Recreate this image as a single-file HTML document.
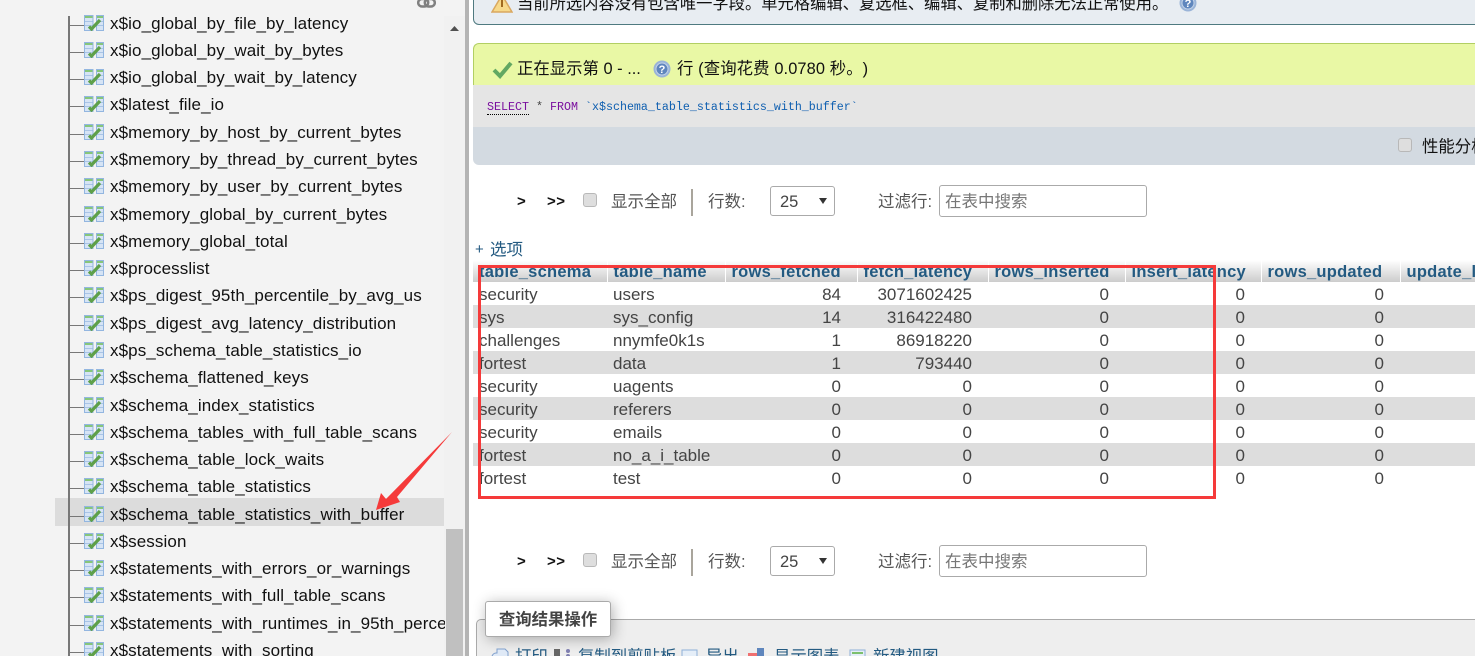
<!DOCTYPE html>
<html lang="zh">
<head>
<meta charset="utf-8">
<title>phpMyAdmin</title>
<style>
html,body{margin:0;padding:0;width:1475px;height:656px;overflow:hidden;background:#fff}
body{position:relative;font-family:"Liberation Sans","Noto Sans CJK SC",sans-serif;color:#444;text-spacing-trim:space-all}
.a{position:absolute;white-space:nowrap}
#side{left:0;top:0;width:465px;height:656px;background:#f3f3f3;overflow:hidden}
#strip{left:465px;top:0;width:4px;height:656px;background:#b4b4b4}
#track{left:444px;top:16px;width:21px;height:640px;background:#f1f1f1}
#thumb{left:446px;top:529px;width:17px;height:127px;background:#c0c0c0}
#sel{left:55px;top:498px;width:389px;height:28px;background:#dcdcdc}
#vline{left:68px;top:16px;width:1.5px;height:640px;background:#777}
.t{position:absolute;left:110px;width:335px;overflow:hidden;font-size:17px;line-height:22px;height:24px;margin-top:1px;color:#111;white-space:nowrap;letter-spacing:.1px}
.h{position:absolute;left:69px;width:15px;height:1px;margin-top:1.5px;background:#777}
.i{position:absolute;left:84px;width:20px;height:16px}
.msg{font-size:16.4px;color:#111;margin-top:1px}
table{position:absolute;left:473px;top:260px;border-collapse:collapse;table-layout:fixed;width:1002px;font-size:17px}
th,td{padding:2px 16px 0 6px;overflow:hidden;white-space:nowrap;box-sizing:border-box}
th{height:22px;line-height:20px;font-weight:bold;color:#235a81;text-align:left;background:linear-gradient(#fff,#ccc);border-right:1px solid #fff;font-size:16.5px;letter-spacing:.25px}
td{height:23px;line-height:21px;color:#444}
td.r{text-align:right}
tr.e td{background:#ddd}
.nav{font-size:16.5px;color:#555;margin-top:1px}
.box{position:absolute;background:#dedede;border:1px solid #b8b8b8;border-radius:3px;box-sizing:border-box;width:14px;height:14px}
.sel{border:1px solid #aaa;border-radius:3px;background:#fff;box-sizing:border-box}
.lnk{font-size:16.4px;line-height:20px;color:#235a81;top:647px}
</style>
</head>
<body>
<svg width="0" height="0" style="position:absolute">
<symbol id="v" viewBox="0 0 20 16">
<rect x="0.5" y="0.5" width="8.5" height="15" fill="#d6e4f5" stroke="#93b6e0"/>
<rect x="12.5" y="0.5" width="7" height="15" fill="#d6e4f5" stroke="#93b6e0"/>
<rect x="1" y="1" width="7.5" height="2" fill="#86c67a"/>
<rect x="13" y="1" width="6" height="2" fill="#86c67a"/>
<path d="M1 6.5h7.5M1 10.5h7.5M13 6.5h6M13 10.5h6" stroke="#a9c4e6"/>
<path d="M5 11.5l2.5 2.5L16 5" fill="none" stroke="#5ea04a" stroke-width="3.2"/>
</symbol>
<symbol id="q" viewBox="0 0 18 18">
<circle cx="9" cy="9" r="8.5" fill="#9ab4d8"/>
<circle cx="9" cy="9" r="6" fill="#5f86bd" stroke="#c3d3e8"/>
<text x="9" y="13" font-size="11" font-weight="bold" text-anchor="middle" fill="#fff" font-family="Liberation Sans">?</text>
</symbol>
</svg>

<div class="a" id="side">
<div class="a" id="track"></div>
<div class="a" id="thumb"></div>
<div class="a" id="sel"></div>
<div class="a" id="vline"></div>
<svg class="a" style="left:417px;top:-3px" width="19" height="11"><rect x="1.2" y="2" width="10" height="7.5" rx="3.7" fill="none" stroke="#808080" stroke-width="2.5"/><rect x="7.8" y="2" width="10" height="7.5" rx="3.7" fill="none" stroke="#808080" stroke-width="2.5"/></svg>
<svg class="a" style="left:449px;top:25px" width="11" height="7"><path d="M5.5 1L10 6H1z" fill="#505050"/></svg>

<div class="h" style="top:23px"></div><svg class="i" style="top:15px"><use href="#v"/></svg><div class="t" style="top:12px">x$io_global_by_file_by_latency</div>
<div class="h" style="top:50px"></div><svg class="i" style="top:42px"><use href="#v"/></svg><div class="t" style="top:39px">x$io_global_by_wait_by_bytes</div>
<div class="h" style="top:77px"></div><svg class="i" style="top:69px"><use href="#v"/></svg><div class="t" style="top:66px">x$io_global_by_wait_by_latency</div>
<div class="h" style="top:104px"></div><svg class="i" style="top:96px"><use href="#v"/></svg><div class="t" style="top:93px">x$latest_file_io</div>
<div class="h" style="top:132px"></div><svg class="i" style="top:124px"><use href="#v"/></svg><div class="t" style="top:121px">x$memory_by_host_by_current_bytes</div>
<div class="h" style="top:159px"></div><svg class="i" style="top:151px"><use href="#v"/></svg><div class="t" style="top:148px">x$memory_by_thread_by_current_bytes</div>
<div class="h" style="top:186px"></div><svg class="i" style="top:178px"><use href="#v"/></svg><div class="t" style="top:175px">x$memory_by_user_by_current_bytes</div>
<div class="h" style="top:214px"></div><svg class="i" style="top:206px"><use href="#v"/></svg><div class="t" style="top:203px">x$memory_global_by_current_bytes</div>
<div class="h" style="top:241px"></div><svg class="i" style="top:233px"><use href="#v"/></svg><div class="t" style="top:230px">x$memory_global_total</div>
<div class="h" style="top:268px"></div><svg class="i" style="top:260px"><use href="#v"/></svg><div class="t" style="top:257px">x$processlist</div>
<div class="h" style="top:295px"></div><svg class="i" style="top:287px"><use href="#v"/></svg><div class="t" style="top:284px">x$ps_digest_95th_percentile_by_avg_us</div>
<div class="h" style="top:323px"></div><svg class="i" style="top:315px"><use href="#v"/></svg><div class="t" style="top:312px">x$ps_digest_avg_latency_distribution</div>
<div class="h" style="top:350px"></div><svg class="i" style="top:342px"><use href="#v"/></svg><div class="t" style="top:339px">x$ps_schema_table_statistics_io</div>
<div class="h" style="top:377px"></div><svg class="i" style="top:369px"><use href="#v"/></svg><div class="t" style="top:366px">x$schema_flattened_keys</div>
<div class="h" style="top:405px"></div><svg class="i" style="top:397px"><use href="#v"/></svg><div class="t" style="top:394px">x$schema_index_statistics</div>
<div class="h" style="top:432px"></div><svg class="i" style="top:424px"><use href="#v"/></svg><div class="t" style="top:421px">x$schema_tables_with_full_table_scans</div>
<div class="h" style="top:459px"></div><svg class="i" style="top:451px"><use href="#v"/></svg><div class="t" style="top:448px">x$schema_table_lock_waits</div>
<div class="h" style="top:486px"></div><svg class="i" style="top:478px"><use href="#v"/></svg><div class="t" style="top:475px">x$schema_table_statistics</div>
<div class="h" style="top:514px"></div><svg class="i" style="top:506px"><use href="#v"/></svg><div class="t" style="top:503px">x$schema_table_statistics_with_buffer</div>
<div class="h" style="top:541px"></div><svg class="i" style="top:533px"><use href="#v"/></svg><div class="t" style="top:530px">x$session</div>
<div class="h" style="top:568px"></div><svg class="i" style="top:560px"><use href="#v"/></svg><div class="t" style="top:557px">x$statements_with_errors_or_warnings</div>
<div class="h" style="top:595px"></div><svg class="i" style="top:587px"><use href="#v"/></svg><div class="t" style="top:584px">x$statements_with_full_table_scans</div>
<div class="h" style="top:623px"></div><svg class="i" style="top:615px"><use href="#v"/></svg><div class="t" style="top:612px">x$statements_with_runtimes_in_95th_percentile</div>
<div class="h" style="top:650px"></div><svg class="i" style="top:642px"><use href="#v"/></svg><div class="t" style="top:639px">x$statements_with_sorting</div>
</div>
<div class="a" id="strip"></div>

<!-- top notice -->
<div class="a" style="left:473px;top:-10px;width:1010px;height:35px;background:#e8edf2;border:1px solid #4f7a80;border-top:0;border-radius:0 0 0 6px;box-sizing:border-box"></div>
<svg class="a" style="left:491px;top:-6px" width="22" height="20"><path d="M11 1L21 18H1z" fill="#f7d98a" stroke="#d9a860" stroke-width="1.5"/><rect x="10" y="6" width="2" height="7" fill="#a06a20"/></svg>
<div class="a msg" style="left:517px;top:-7px;line-height:20px;font-size:16.3px">当前所选内容没有包含唯一字段。单元格编辑、复选框、编辑、复制和删除无法正常使用。</div>
<svg class="a" style="left:1179px;top:-6px" width="18" height="18"><use href="#q"/></svg>

<!-- success -->
<div class="a" style="left:473px;top:43px;width:1010px;height:42px;background:#e9f8a5;border-top:1px solid #b2cf63;border-left:1px solid #b2cf63;border-radius:6px 0 0 0;box-sizing:border-box"></div>
<svg class="a" style="left:492px;top:60px" width="21" height="19"><path d="M2 10l6 6L19 3" fill="none" stroke="#62a862" stroke-width="4"/></svg>
<div class="a msg" style="left:517px;top:57px;line-height:22px">正在显示第 0 - ...</div>
<svg class="a" style="left:653px;top:60px" width="18" height="18"><use href="#q"/></svg>
<div class="a msg" style="left:677px;top:57px;line-height:22px;letter-spacing:.1px">行 (查询花费 0.0780 秒。)</div>

<div class="a" style="left:473px;top:85px;width:1002px;height:42px;background:#e5e5e5"></div>
<div class="a" style="left:487px;top:99px;font:11.67px/16px 'Liberation Mono',monospace;color:#444"><span style="color:#7a0f9e;border-bottom:1px dotted #000">SELECT</span> * <span style="color:#7a0f9e">FROM</span> <span style="color:#0f5fb0">`x$schema_table_statistics_with_buffer`</span></div>
<div class="a" style="left:473px;top:127px;width:1002px;height:38px;background:#d3dae1;border-radius:0 0 0 6px"></div>
<div class="box" style="left:1398px;top:138px"></div>
<div class="a msg" style="left:1422px;top:135px;line-height:22px">性能分析</div>

<!-- nav 1 -->
<div class="a nav" style="left:517px;top:190px;font-weight:bold;color:#111;line-height:22px;font-size:15px">&gt;</div>
<div class="a nav" style="left:547px;top:190px;font-weight:bold;color:#111;line-height:22px;font-size:15px;letter-spacing:.5px">&gt;&gt;</div>
<div class="box" style="left:583px;top:193px"></div>
<div class="a nav" style="left:611px;top:190px;line-height:22px">显示全部</div>
<div class="a" style="left:691px;top:189px;width:2px;height:27px;background:#a9a59c"></div>
<div class="a nav" style="left:708px;top:190px;line-height:22px">行数:</div>
<div class="a sel" style="left:770px;top:186px;width:65px;height:30px"></div>
<div class="a nav" style="left:780px;top:190px;line-height:22px;color:#444">25</div>
<svg class="a" style="left:818px;top:197px" width="10" height="8"><path d="M1 1h8L5 7z" fill="#333"/></svg>
<div class="a nav" style="left:878px;top:190px;line-height:22px">过滤行:</div>
<div class="a sel" style="left:939px;top:185px;width:208px;height:32px"></div>
<div class="a nav" style="left:945px;top:190px;line-height:22px;color:#777">在表中搜索</div>

<div class="a" style="left:475px;top:240px;font-size:15px;line-height:20px;color:#235a81">+</div>
<div class="a" style="left:490px;top:240px;font-size:16.5px;line-height:20px;color:#235a81">选项</div>

<table>
<colgroup><col style="width:134px"><col style="width:118px"><col style="width:132px"><col style="width:131px"><col style="width:137px"><col style="width:136px"><col style="width:139px"><col style="width:75px"></colgroup>
<tr><th>table_schema</th><th>table_name</th><th>rows_fetched</th><th>fetch_latency</th><th>rows_inserted</th><th>insert_latency</th><th>rows_updated</th><th style="padding-right:0">update_latency</th></tr>
<tr><td>security</td><td>users</td><td class="r">84</td><td class="r">3071602425</td><td class="r">0</td><td class="r">0</td><td class="r">0</td><td></td></tr>
<tr class="e"><td>sys</td><td>sys_config</td><td class="r">14</td><td class="r">316422480</td><td class="r">0</td><td class="r">0</td><td class="r">0</td><td></td></tr>
<tr><td>challenges</td><td>nnymfe0k1s</td><td class="r">1</td><td class="r">86918220</td><td class="r">0</td><td class="r">0</td><td class="r">0</td><td></td></tr>
<tr class="e"><td>fortest</td><td>data</td><td class="r">1</td><td class="r">793440</td><td class="r">0</td><td class="r">0</td><td class="r">0</td><td></td></tr>
<tr><td>security</td><td>uagents</td><td class="r">0</td><td class="r">0</td><td class="r">0</td><td class="r">0</td><td class="r">0</td><td></td></tr>
<tr class="e"><td>security</td><td>referers</td><td class="r">0</td><td class="r">0</td><td class="r">0</td><td class="r">0</td><td class="r">0</td><td></td></tr>
<tr><td>security</td><td>emails</td><td class="r">0</td><td class="r">0</td><td class="r">0</td><td class="r">0</td><td class="r">0</td><td></td></tr>
<tr class="e"><td>fortest</td><td>no_a_i_table</td><td class="r">0</td><td class="r">0</td><td class="r">0</td><td class="r">0</td><td class="r">0</td><td></td></tr>
<tr><td>fortest</td><td>test</td><td class="r">0</td><td class="r">0</td><td class="r">0</td><td class="r">0</td><td class="r">0</td><td></td></tr>
</table>

<!-- red rectangle -->
<div class="a" style="left:478px;top:265px;width:738px;height:234px;border:3px solid #f53a3a;box-sizing:border-box"></div>
<!-- red arrow -->
<svg class="a" style="left:370px;top:428px" width="90" height="90"><path d="M82 4L27 69 30 74 6 82 11 65 16 71z" fill="#f53a3a"/></svg>

<!-- nav 2 -->
<div class="a nav" style="left:517px;top:550px;font-weight:bold;color:#111;line-height:22px;font-size:15px">&gt;</div>
<div class="a nav" style="left:547px;top:550px;font-weight:bold;color:#111;line-height:22px;font-size:15px;letter-spacing:.5px">&gt;&gt;</div>
<div class="box" style="left:583px;top:553px"></div>
<div class="a nav" style="left:611px;top:550px;line-height:22px">显示全部</div>
<div class="a" style="left:691px;top:549px;width:2px;height:27px;background:#a9a59c"></div>
<div class="a nav" style="left:708px;top:550px;line-height:22px">行数:</div>
<div class="a sel" style="left:770px;top:546px;width:65px;height:30px"></div>
<div class="a nav" style="left:780px;top:550px;line-height:22px;color:#444">25</div>
<svg class="a" style="left:818px;top:557px" width="10" height="8"><path d="M1 1h8L5 7z" fill="#333"/></svg>
<div class="a nav" style="left:878px;top:550px;line-height:22px">过滤行:</div>
<div class="a sel" style="left:939px;top:545px;width:208px;height:32px"></div>
<div class="a nav" style="left:945px;top:550px;line-height:22px;color:#777">在表中搜索</div>

<!-- fieldset -->
<div class="a" style="left:476px;top:619px;width:1010px;height:60px;background:#eee;border:1px solid #aaa;border-radius:5px 0 0 0;box-sizing:border-box"></div>
<div class="a" style="left:485px;top:601px;width:126px;height:36px;background:#fff;border:1px solid #aaa;border-radius:3px;box-sizing:border-box;box-shadow:2px 2px 14px rgba(0,0,0,.3);font-size:16.4px;font-weight:bold;line-height:37px;text-align:center;color:#444">查询结果操作</div>
<div class="a lnk" style="left:515px">打印</div>
<div class="a lnk" style="left:578px">复制到剪贴板</div>
<div class="a lnk" style="left:706px">导出</div>
<div class="a lnk" style="left:774px">显示图表</div>
<div class="a lnk" style="left:873px">新建视图</div>
<svg class="a" style="left:491px;top:648px" width="20" height="10"><path d="M1 9a4 4 0 0 1 4-4h1V1h8l3 3v5" fill="#dfe9f6" stroke="#7f9fcc"/></svg>
<svg class="a" style="left:553px;top:648px" width="20" height="10"><rect x="1" y="1" width="6" height="9" fill="#666"/><circle cx="15" cy="3" r="2" fill="#7f7fb0"/><circle cx="15" cy="8" r="2" fill="#7f7fb0"/></svg>
<svg class="a" style="left:681px;top:649px" width="18" height="9"><rect x="1" y="1" width="15" height="10" fill="#e5eef8" stroke="#8fb0d8"/></svg>
<svg class="a" style="left:748px;top:648px" width="18" height="10"><rect x="0" y="5" width="10" height="6" fill="#f07070"/><rect x="9" y="0" width="7" height="11" fill="#5f86bd"/></svg>
<svg class="a" style="left:849px;top:649px" width="18" height="9"><rect x="1" y="1" width="15" height="10" fill="#e5eef8" stroke="#8fb0d8"/><rect x="3" y="3" width="11" height="2" fill="#7cc06e"/></svg>
</body>
</html>
